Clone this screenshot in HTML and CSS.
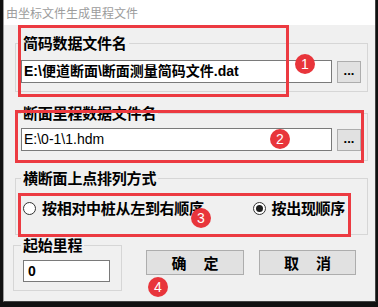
FILE: index.html
```html
<!DOCTYPE html>
<html lang="zh-CN">
<head>
<meta charset="utf-8">
<title>由坐标文件生成里程文件</title>
<link rel="stylesheet" href="styles.css">
</head>
<body>
<div class="window">
  <div class="titlebar">由坐标文件生成里程文件</div>
  <div class="content">
    <fieldset class="group g1">
      <legend>简码数据文件名</legend>
      <div class="filerow">
        <div class="input bold">E:\便道断面\断面测量简码文件.dat</div>
        <div class="browse">...</div>
      </div>
    </fieldset>
    <fieldset class="group g2">
      <legend>断面里程数据文件名</legend>
      <div class="filerow">
        <div class="input">E:\0-1\1.hdm</div>
        <div class="browse">...</div>
      </div>
    </fieldset>
    <fieldset class="group g3">
      <legend>横断面上点排列方式</legend>
      <div class="radiorow">
        <label class="radio"><span class="dot"></span>按相对中桩从左到右顺序</label>
        <label class="radio second"><span class="dot checked"></span>按出现顺序</label>
      </div>
    </fieldset>
    <div class="bottomrow">
      <fieldset class="group g4">
        <legend>起始里程</legend>
        <div class="input small bold">0</div>
      </fieldset>
      <div class="buttons">
        <div class="btn"><span>确</span><span>定</span></div>
        <div class="btn"><span>取</span><span>消</span></div>
      </div>
    </div>
  </div>

  <div class="mark box1"></div>
  <div class="mark box2"></div>
  <div class="mark box3"></div>
  <div class="badge b1">1</div>
  <div class="badge b2">2</div>
  <div class="badge b3">3</div>
  <div class="badge b4">4</div>
</div>
</body>
</html>
```
FILE: styles.css
```css
* { box-sizing: border-box; }
html, body { margin: 0; padding: 0; }
body {
  background: #111;
  width: 378px;
  height: 307px;
  overflow: hidden;
  font-family: "Noto Sans CJK SC", "Liberation Sans", sans-serif;
}
.window {
  position: relative;
  margin-left: 3px;
  width: 373px;
  height: 302px;
  background: #f0f0f0;
  border-left: 1px solid #9a9a9a;
  border-right: 1px solid #444;
  border-bottom: 1px solid #444;
}
.titlebar {
  height: 25px;
  background: #fff;
  color: #9c9c9c;
  font-size: 12px;
  line-height: 25px;
  padding-left: 2px;
}
.content {
  padding: 10px 0 0 11px;
}
.group {
  margin: 0;
  border: 1px solid #d6d6d6;
  min-width: 0;
}
.group legend {
  padding: 0 2px;
  font-size: 15px;
  font-weight: 700;
  line-height: 16px;
  color: #000;
  letter-spacing: -0.2px;
}
.g1, .g2, .g3 { width: 353px; }
.g1 { padding: 9px 6px 8px 5px; }
.g2 { margin-top: 13px; padding: 7px 6px 9px 5px; }
.g3 { margin-top: 9px; padding: 13px 22px 17px 7px; }
.g3 legend { margin-left: -2px; }
.filerow {
  display: flex;
  align-items: center;
  gap: 5px;
}
.input {
  width: 311px;
  height: 23px;
  background: #fff;
  border: 1px solid #7a7a7a;
  font-family: "Liberation Sans", "Noto Sans CJK SC", sans-serif;
  font-size: 14px;
  line-height: 21px;
  padding-left: 2px;
  color: #000;
  white-space: nowrap;
  overflow: hidden;
}
.input.bold { font-weight: 700; }
.browse {
  width: 24px;
  height: 22px;
  background: #e1e1e1;
  border: 1px solid #adadad;
  font-family: "Liberation Sans", sans-serif;
  font-weight: 700;
  font-size: 13px;
  line-height: 18px;
  text-align: center;
}
.radiorow {
  display: flex;
  align-items: center;
  height: 18px;
}
.radio {
  display: flex;
  align-items: center;
  gap: 6px;
  font-size: 15px;
  font-weight: 700;
  letter-spacing: -0.3px;
  line-height: 18px;
  white-space: nowrap;
}
.radio.second { margin-left: auto; gap: 5px; }
.dot {
  width: 13px;
  height: 13px;
  border-radius: 50%;
  border: 1px solid #333;
  background: #fff;
  display: flex;
  align-items: center;
  justify-content: center;
  flex: none;
}
.dot.checked::after {
  content: "";
  width: 7px;
  height: 7px;
  border-radius: 50%;
  background: #1e1e1e;
}
.bottomrow {
  display: flex;
  align-items: flex-start;
  margin-top: 2px;
}
.g4 {
  width: 109px;
  margin-left: -2px;
  padding: 7px 11px 8px 9px;
}
.g4 legend { margin-left: -2px; }
.input.small {
  width: 87px;
  height: 22px;
  padding-left: 4px;
  line-height: 20px;
}
.buttons {
  display: flex;
  gap: 15px;
  margin-top: 13px;
  margin-left: 24px;
}
.btn {
  width: 98px;
  height: 25px;
  background: #e1e1e1;
  border: 1px solid #adadad;
  display: flex;
  justify-content: center;
  align-items: center;
  gap: 17px;
  font-size: 15px;
  font-weight: 700;
  line-height: 18px;
}
.btn + .btn { width: 97px; }
.mark {
  position: absolute;
  border: 3px solid #ec3a41;
}
.box1 { left: 14px; top: 25px; width: 271px; height: 72px; }
.box2 { left: 11px; top: 110px; width: 349px; height: 53px; }
.box3 { left: 14px; top: 193px; width: 333px; height: 44px; }
.badge {
  position: absolute;
  width: 20px;
  height: 20px;
  border-radius: 50%;
  background: #e8353b;
  color: #fff;
  font-family: "Liberation Sans", sans-serif;
  font-size: 14px;
  line-height: 20px;
  text-align: center;
}
.b1 { left: 291px; top: 54px; }
.b2 { left: 266px; top: 129px; }
.b3 { left: 187px; top: 208px; }
.b4 { left: 144px; top: 277px; }
```
